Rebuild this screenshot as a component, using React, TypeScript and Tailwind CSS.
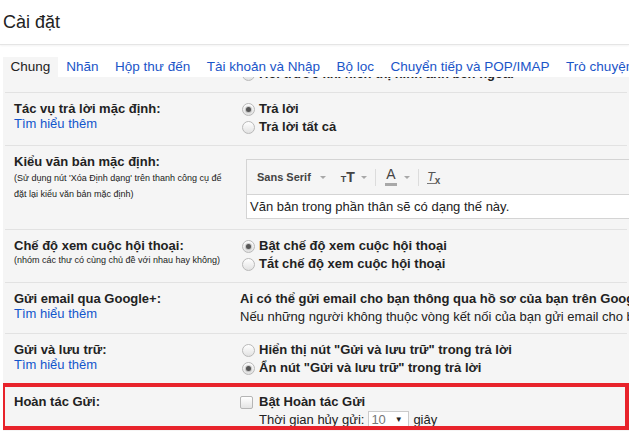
import React from 'react';

const tabs = ['Chung', 'Nhãn', 'Hộp thư đến', 'Tài khoản và Nhập', 'Bộ lọc', 'Chuyển tiếp và POP/IMAP', 'Trò chuyện'];

function Radio({ checked }: { checked?: boolean }) {
    return (
        <span className="ml-[2px] mr-[4px] flex h-[13px] w-[13px] shrink-0 items-center justify-center rounded-full border border-[#b9b9b9] bg-linear-to-b from-white to-[#e2e2e2]">
            {checked && <span className="h-[5px] w-[5px] rounded-full bg-[#555] shadow-[0_0_1px_1px_rgba(110,110,110,0.35)]" />}
        </span>
    );
}

function Option({ checked, children }: { checked?: boolean; children: React.ReactNode }) {
    return (
        <div className="flex h-[18px] items-center whitespace-nowrap text-[13px] font-bold">
            <Radio checked={checked} />
            {children}
        </div>
    );
}

function Caret() {
    return <span className="inline-block h-0 w-0 border-x-[3px] border-t-[3px] border-x-transparent border-t-[#a8a8a8]" />;
}

interface RowProps {
    left?: React.ReactNode;
    children: React.ReactNode;
    rightClass?: string;
    className?: string;
}

function Row({ left, children, rightClass = 'pt-[7px] pb-[9px]', className = '' }: RowProps) {
    return (
        <div className={`mx-[2px] flex border-b border-[#e2e2e2] pl-[9px] ${className}`}>
            <div className="w-[226px] shrink-0 pt-[8px]">{left}</div>
            <div className={`min-w-0 flex-1 ${rightClass}`}>{children}</div>
        </div>
    );
}

function Label({ children }: { children: React.ReactNode }) {
    return <div className="text-[13px] font-bold leading-[16px] whitespace-nowrap">{children}</div>;
}

function LearnMore() {
    return <div className="text-[13px] leading-[14px] text-[#15c]">Tìm hiểu thêm</div>;
}

export default function App() {
    return (
        <div className="h-[431px] w-[629px] overflow-hidden bg-white font-['Liberation_Sans',Arial,sans-serif] text-[#222]">
            {/* Header */}
            <div className="h-[45px] border-b border-[#e5e5e5] pl-[3px] pt-[10px] shadow-[0_1px_2px_rgba(0,0,0,0.05)]">
                <h1 className="text-[18px] leading-[24px]">Cài đặt</h1>
            </div>

            {/* Tabs */}
            <div className="mt-[12px] flex h-[20px] whitespace-nowrap pl-[3px] text-[13.5px] leading-[20px]">
                {tabs.map((t, i) => (
                    <div
                        key={t}
                        className={i === 0 ? 'mr-[0.5px] bg-[#f5f5f5] px-[7.5px] text-[#222]' : 'mr-[0.5px] px-[8px] text-[#1a55c8]'}
                    >
                        {t}
                    </div>
                ))}
            </div>

            {/* Settings body */}
            <div className="ml-[3px] h-[354px] overflow-hidden bg-[#f5f5f5]">
                <Row className="-mt-[37px]" left={<Label>Hình ảnh:</Label>}>
                    <Option checked>Luôn hiển thị hình ảnh bên ngoài</Option>
                    <Option>Hỏi trước khi hiển thị hình ảnh bên ngoài</Option>
                </Row>

                <Row left={<><Label>Tác vụ trả lời mặc định:</Label><LearnMore /></>}>
                    <Option checked>Trả lời</Option>
                    <Option>Trả lời tất cả</Option>
                </Row>

                <Row
                    rightClass="pt-[13px] pb-[10px]"
                    left={
                        <>
                            <Label>Kiểu văn bản mặc định:</Label>
                            <div className="whitespace-nowrap text-[9px] leading-[16px]">
                                (Sử dụng nút 'Xóa Định dạng' trên thanh công cụ để
                                <br />
                                đặt lại kiểu văn bản mặc định)
                            </div>
                        </>
                    }
                >
                    <div className="ml-[6px] w-[460px] border border-[#d4d4d4]">
                        <div className="flex h-[34px] items-center pl-[10px] text-[#444]">
                            <span className="text-[11px] font-bold">Sans Serif</span>
                            <span className="ml-[9px] flex"><Caret /></span>
                            <span className="ml-[15px] flex items-baseline font-bold leading-none">
                                <span className="text-[9px]">T</span>
                                <span className="text-[14px]">T</span>
                            </span>
                            <span className="ml-[6px] flex"><Caret /></span>
                            <span className="ml-[8px] h-[17px] w-px bg-[#dcdcdc]" />
                            <span className="ml-[9px] flex flex-col items-center">
                                <span className="text-[14px] leading-[13px]">A</span>
                                <span className="mt-[2px] h-[3px] w-[12px] bg-[#a8a8a8]" />
                            </span>
                            <span className="ml-[7px] flex"><Caret /></span>
                            <span className="ml-[8px] h-[17px] w-px bg-[#dcdcdc]" />
                            <span className="ml-[8px] flex items-end leading-none text-[#555]">
                                <span className="border-b border-[#777] text-[13px] italic">T</span>
                                <span className="-mb-[2px] text-[10px] font-bold">x</span>
                            </span>
                        </div>
                        <div className="h-[24px] border-t border-[#d4d4d4] bg-white pl-[3px] text-[13px] leading-[23px] whitespace-nowrap">
                            Văn bản trong phần thân sẽ có dạng thế này.
                        </div>
                    </div>
                </Row>

                <Row
                    left={
                        <>
                            <Label>Chế độ xem cuộc hội thoại:</Label>
                            <div className="whitespace-nowrap text-[9px] leading-[12px]">
                                (nhóm các thư có cùng chủ đề với nhau hay không)
                            </div>
                        </>
                    }
                >
                    <Option checked>Bật chế độ xem cuộc hội thoại</Option>
                    <Option>Tắt chế độ xem cuộc hội thoại</Option>
                </Row>

                <Row rightClass="pt-[7px] pb-[7px]" left={<><Label>Gửi email qua Google+:</Label><LearnMore /></>}>
                    <div className="whitespace-nowrap text-[13px] font-bold leading-[18px]">
                        Ai có thể gửi email cho bạn thông qua hồ sơ của bạn trên Google+?
                    </div>
                    <div className="whitespace-nowrap text-[13px] leading-[18px]">
                        Nếu những người không thuộc vòng kết nối của bạn gửi email cho bạn, họ sẽ cần sự chấp thuận của bạn.
                    </div>
                </Row>

                <Row rightClass="pt-[7px] pb-[8px]" left={<><Label>Gửi và lưu trữ:</Label><LearnMore /></>}>
                    <Option>Hiển thị nút "Gửi và lưu trữ" trong trả lời</Option>
                    <Option checked>Ẩn nút "Gửi và lưu trữ" trong trả lời</Option>
                </Row>

                <div className="relative">
                    <Row left={<Label>Hoàn tác Gửi:</Label>}>
                        <div className="flex h-[18px] items-center whitespace-nowrap text-[13px] font-bold">
                            <span className="mr-[6px] h-[13px] w-[13px] shrink-0 rounded-[2px] border border-[#b5b5b5] bg-linear-to-b from-white to-[#e4e4e4]" />
                            Bật Hoàn tác Gửi
                        </div>
                        <div className="flex h-[18px] items-center whitespace-nowrap pl-[19px] text-[13px]">
                            Thời gian hủy gửi:
                            <span className="ml-[4px] flex h-[18px] w-[41px] items-center border border-[#cbcbcb] bg-white pl-[2px] text-[#777]">
                                10
                                <span className="ml-[9px] text-[8px] text-[#222]">▼</span>
                            </span>
                            <span className="ml-[4px]">giây</span>
                        </div>
                    </Row>
                    {/* annotation box */}
                    <div className="pointer-events-none absolute -left-[2px] -top-[3px] right-0 h-[47px] border-4 border-[#e8232b]" />
                </div>
            </div>
        </div>
    );
}
